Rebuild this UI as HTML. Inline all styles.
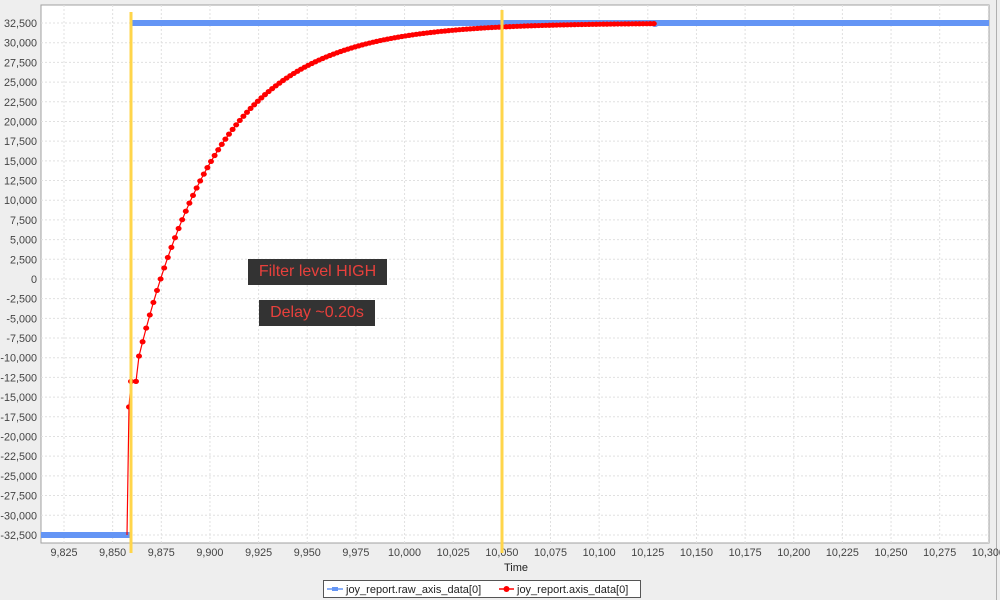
<!DOCTYPE html>
<html><head><meta charset="utf-8"><style>
body{margin:0;width:1000px;height:600px;background:#eeeeee;overflow:hidden;font-family:"Liberation Sans",sans-serif;position:relative}
.box{position:absolute;background:#333333;color:#e8403c;font-size:16px;text-align:center;line-height:26px}
</style></head><body>
<svg id="s" width="1000" height="600" style="position:absolute;left:0;top:0" font-family="Liberation Sans, sans-serif">
<rect x="41" y="5" width="948" height="538" fill="#fff" stroke="#a0a0a0" stroke-width="1"/>
<line x1="996.5" y1="0" x2="996.5" y2="600" stroke="#b0b0b0"/>
<g id="grid" stroke="#e0e0e0" stroke-dasharray="2,2" stroke-width="1"></g>
<g id="yl" font-size="10.8" fill="#444" text-anchor="end"></g>
<g id="xl" font-size="10.8" fill="#444" text-anchor="middle"></g>
<text x="516" y="571" font-size="11" fill="#222" text-anchor="middle">Time</text>
<line x1="130" y1="23" x2="989" y2="23" stroke="#6495f5" stroke-width="6"/>
<line x1="41" y1="535" x2="132" y2="535" stroke="#6495f5" stroke-width="6"/>
<ellipse cx="655" cy="24" rx="4" ry="3" fill="#6495f5"/>
<g id="red"></g>
<line x1="131" y1="12" x2="131" y2="553" stroke="#ffd54a" stroke-width="3"/>
<line x1="502" y1="10" x2="502" y2="553" stroke="#ffd54a" stroke-width="3"/>
<rect x="323.5" y="580.5" width="317" height="17" fill="#fff" stroke="#555"/>
<line x1="327" y1="589" x2="343" y2="589" stroke="#6495f5" stroke-width="1.5"/>
<rect x="332" y="587" width="6" height="4" fill="#6495f5"/>
<text x="346" y="593" font-size="11" fill="#222">joy_report.raw_axis_data[0]</text>
<line x1="499" y1="589" x2="514" y2="589" stroke="#f00" stroke-width="1.5"/>
<circle cx="506.5" cy="589" r="3" fill="#f00"/>
<text x="517" y="593" font-size="11" fill="#222">joy_report.axis_data[0]</text>
</svg>
<div class="box" style="left:248px;top:259px;width:139px;height:26px">Filter level HIGH</div>
<div class="box" style="left:259px;top:300px;width:116px;height:26px">Delay ~0.20s</div>
<script>
var ns="http://www.w3.org/2000/svg";
function el(p,t,a,txt){var e=document.createElementNS(ns,t);for(var k in a)e.setAttribute(k,a[k]);if(txt)e.textContent=txt;document.getElementById(p).appendChild(e);return e;}
function Y(v){return 23+(32500-v)/2500*19.69;}
function fmt(n){var s=Math.abs(n).toString().replace(/\B(?=(\d{3})+(?!\d))/g,",");return (n<0?"-":"")+s;}
for(var v=32500;v>=-32500;v-=2500){var y=Y(v);el("grid","line",{x1:41,x2:989,y1:y,y2:y});el("yl","text",{x:37,y:y+4},fmt(v));}
for(var i=0;i<20;i++){var x=64+i*48.65;el("grid","line",{x1:x,x2:x,y1:5,y2:543});
 var t=9825+i*25;var s=(t/1000).toFixed(3).replace(".",",");if(t>=10000)s="10,"+String(t-10000).padStart(3,"0");
 el("xl","text",{x:Math.min(x,990),y:556},s);}
var pts=[[129,Y(-16250)],[131,Y(-13000)],[136,Y(-13000)]];
for(var x=139;x<=655;x+=3.6){var v=32500-45500*Math.exp(-(x-133)/82);pts.push([x,Y(v)]);}
var d="M"+pts.map(function(p){return p[0].toFixed(1)+","+p[1].toFixed(1)}).join("L");
el("red","line",{x1:127,y1:535,x2:129,y2:Y(-16250),stroke:"#f00","stroke-width":1.2});
el("red","path",{d:d,fill:"none",stroke:"#f00","stroke-width":1.2});
pts.forEach(function(p){el("red","ellipse",{cx:p[0],cy:p[1],rx:3,ry:2.6,fill:"#f00"});});
</script>
</body></html>
